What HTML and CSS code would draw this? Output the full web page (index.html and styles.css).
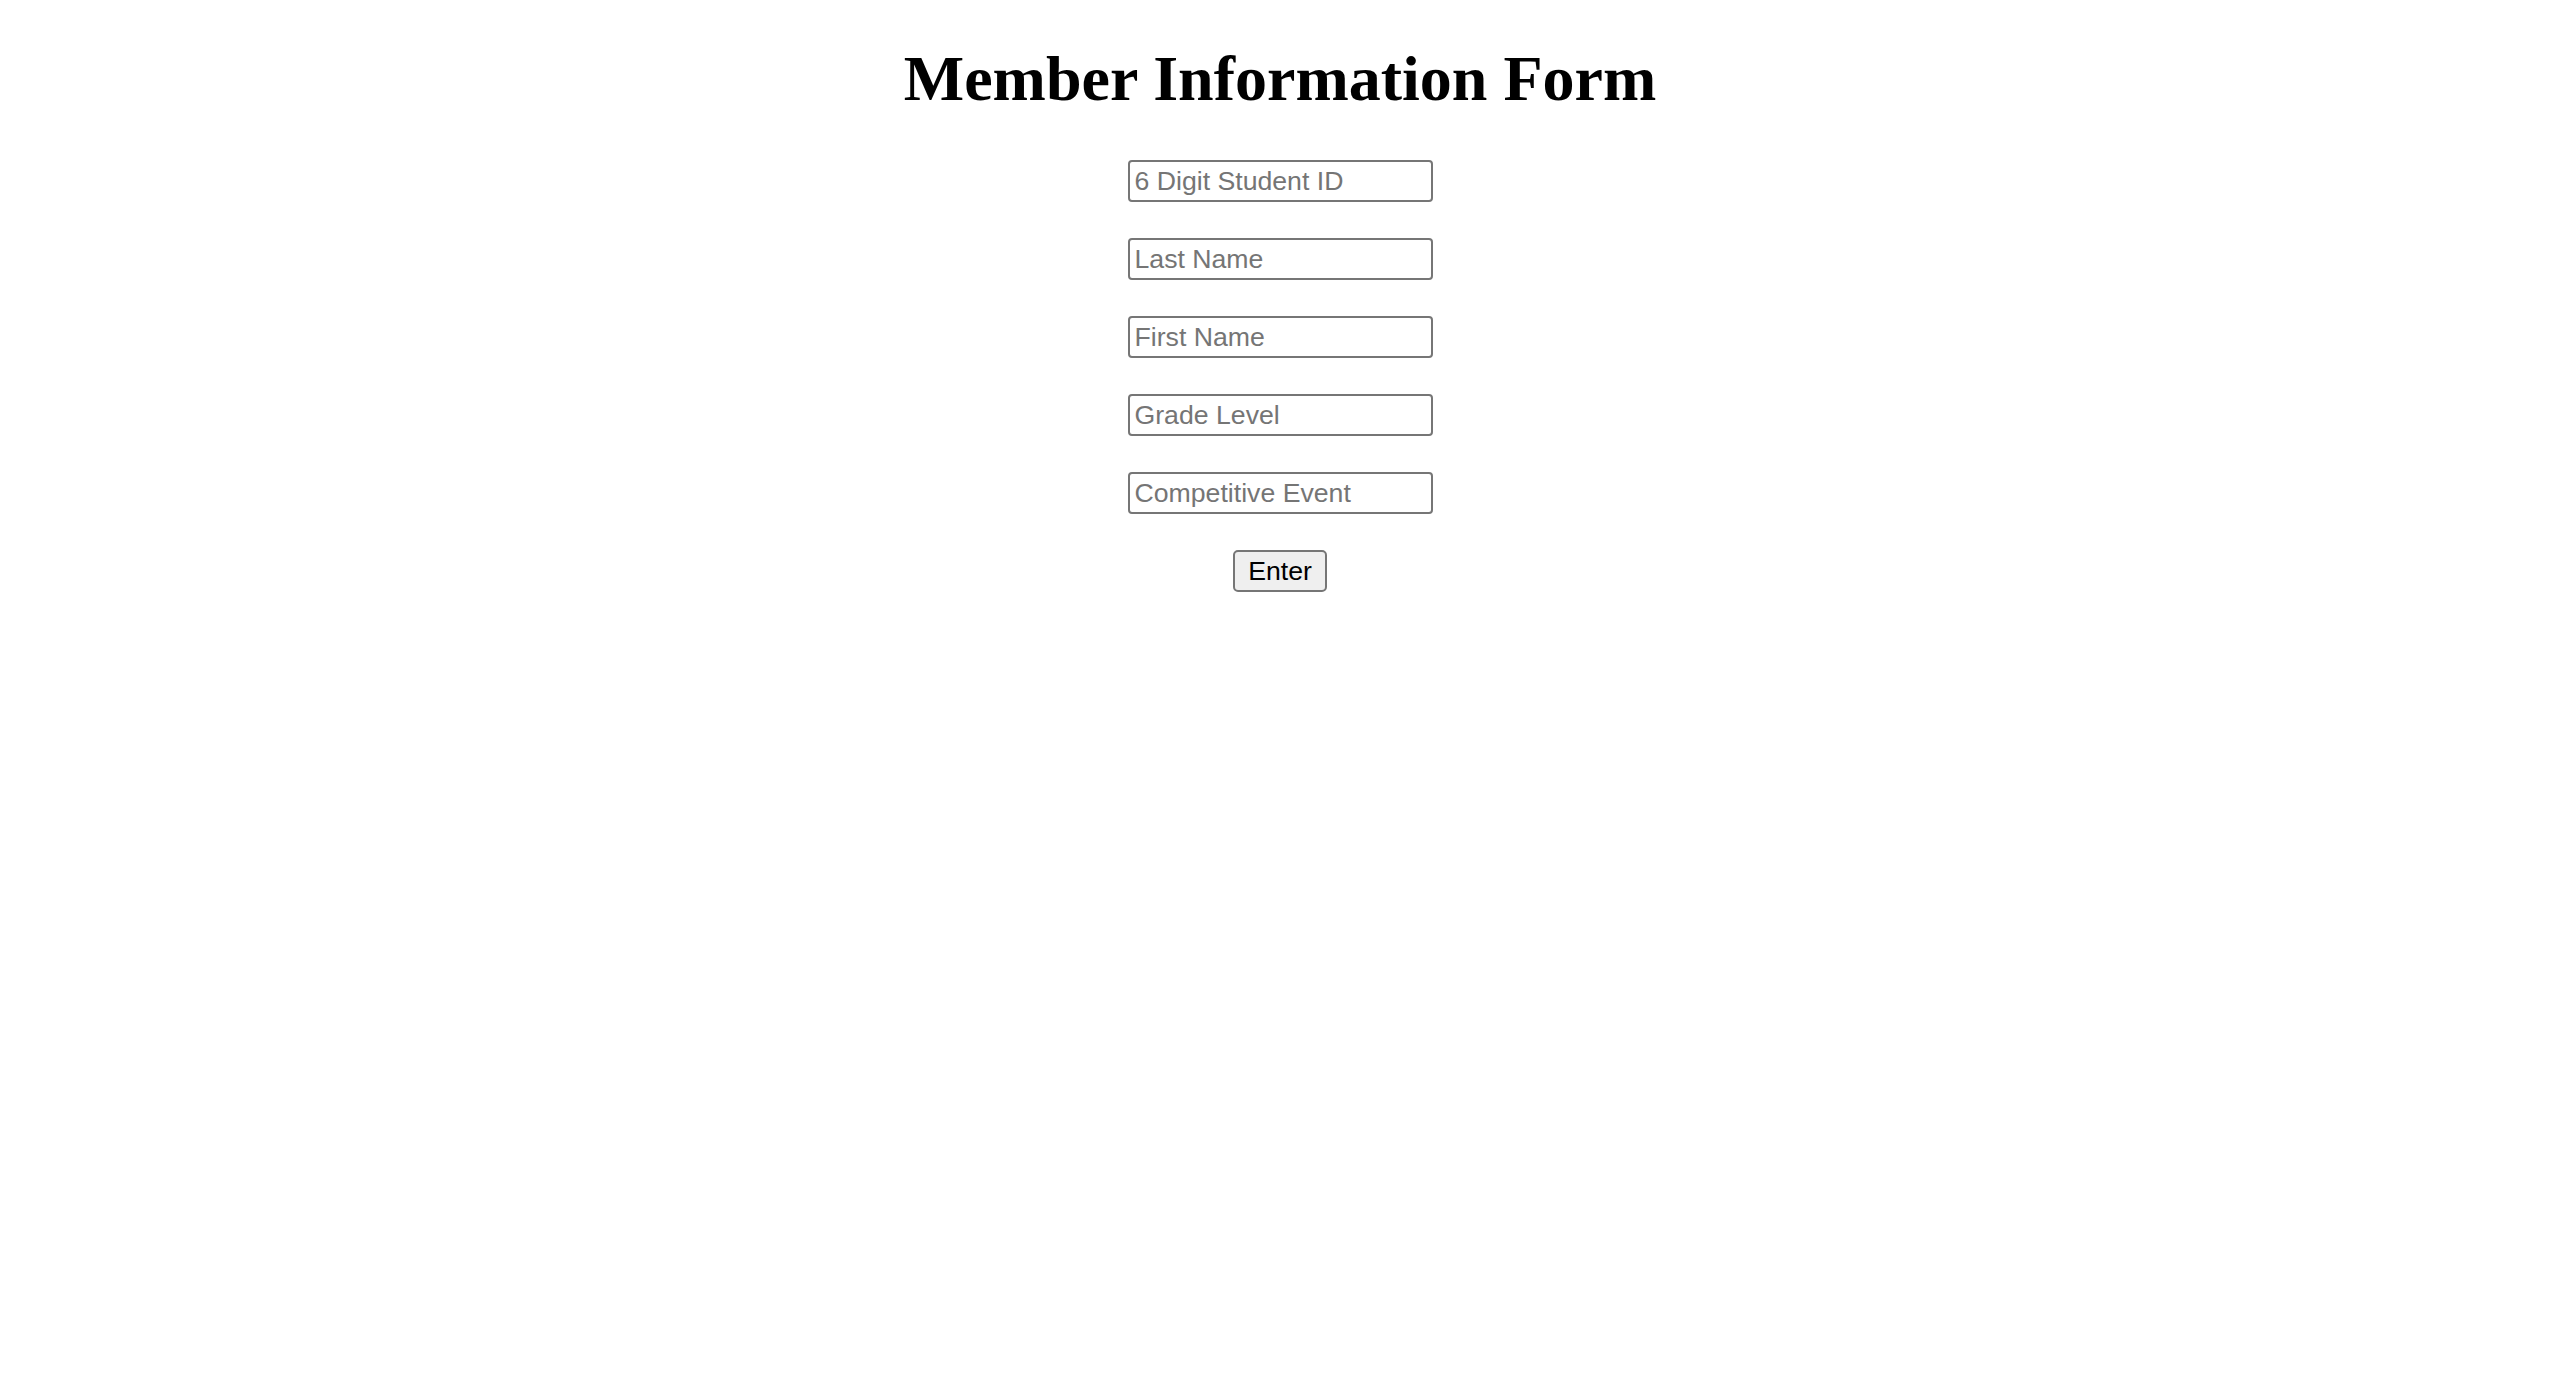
FILE: index.html
```html
<!DOCTYPE html>
<html lang="en">
<head>
<meta charset="utf-8">
<title>Member Information Form</title>
<link rel="stylesheet" href="styles.css">
</head>
<body>
<main class="page">
  <h1 class="title">Member Information Form</h1>
  <form class="member-form">
    <input class="field" type="text" placeholder="6 Digit Student ID">
    <input class="field" type="text" placeholder="Last Name">
    <input class="field" type="text" placeholder="First Name">
    <input class="field" type="text" placeholder="Grade Level">
    <input class="field" type="text" placeholder="Competitive Event">
    <button class="submit" type="button">Enter</button>
  </form>
</main>
</body>
</html>
```
FILE: styles.css
```css
html, body {
  margin: 0;
  padding: 0;
  background: #ffffff;
}

.page {
  display: flex;
  flex-direction: column;
  align-items: center;
}

.title {
  margin: 43px 0 0;
  font-family: "Liberation Serif", "Times New Roman", serif;
  font-weight: bold;
  font-size: 64px;
  line-height: 72px;
  color: #000000;
}

.member-form {
  margin-top: 45px;
  display: flex;
  flex-direction: column;
  align-items: center;
  gap: 36px;
}

.field {
  box-sizing: border-box;
  width: 305px;
  height: 42px;
  margin: 0;
  padding: 0 4px 0 5px;
  border: 2px solid #767676;
  border-radius: 4px;
  background: #ffffff;
  font-family: "Liberation Sans", Arial, sans-serif;
  font-size: 26.67px;
  color: #000000;
  outline: none;
}

.field::placeholder {
  color: #757575;
  opacity: 1;
}

.submit {
  box-sizing: border-box;
  width: 94px;
  height: 42px;
  margin: 0;
  padding: 0 12px;
  border: 2px solid #767676;
  border-radius: 5px;
  background: #efefef;
  font-family: "Liberation Sans", Arial, sans-serif;
  font-size: 26.67px;
  color: #000000;
}
```
